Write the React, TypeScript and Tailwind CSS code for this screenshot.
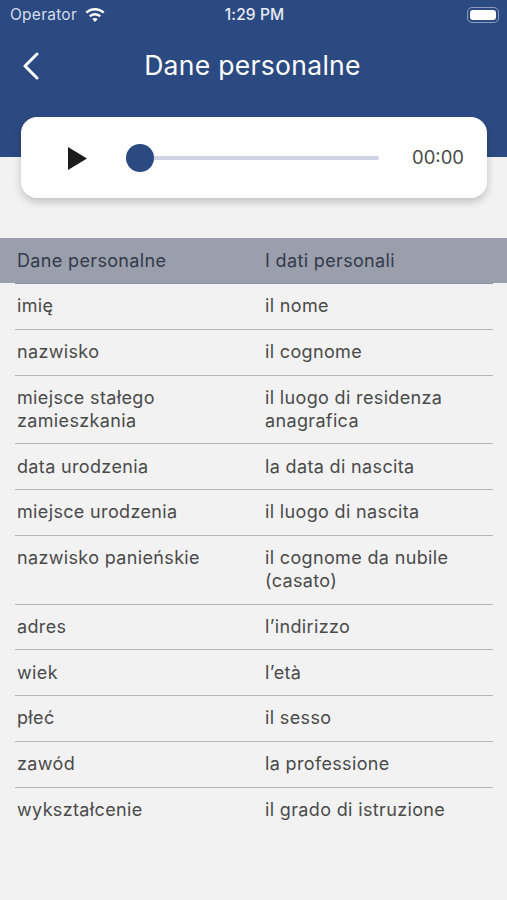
const rows: [string, string][] = [
  ["imię", "il nome"],
  ["nazwisko", "il cognome"],
  ["miejsce stałego zamieszkania", "il luogo di residenza anagrafica"],
  ["data urodzenia", "la data di nascita"],
  ["miejsce urodzenia", "il luogo di nascita"],
  ["nazwisko panieńskie", "il cognome da nubile (casato)"],
  ["adres", "l’indirizzo"],
  ["wiek", "l’età"],
  ["płeć", "il sesso"],
  ["zawód", "la professione"],
  ["wykształcenie", "il grado di istruzione"],
]

function StatusBar() {
  return (
    <div className="grid grid-cols-3 items-center h-[30px] pl-[10px] pr-[8px] text-white text-[15.5px]">
      <div className="flex items-center gap-[8px] text-[#d5dcea] tracking-[0.25px]">
        <span>Operator</span>
        <svg width="20" height="15" viewBox="0 0 20 15" fill="white">
          <path d="M10 0C6.3 0 3 1.4.5 3.8L2.2 5.6C4.2 3.6 7 2.4 10 2.4s5.800 1.200 7.800 3.200l1.700-1.800C17 1.400 13.700 0 10 0Z" />
          <path d="M10 5C7.700 5 5.600 5.900 4 7.400l1.700 1.800C6.800 8.100 8.300 7.400 10 7.400s3.200.7 4.300 1.800L16 7.400C14.400 5.900 12.300 5 10 5Z" />
          <path d="M10 10c-1 0-2 .4-2.700 1.100L10 14l2.700-2.900C12 10.400 11 10 10 10Z" />
        </svg>
      </div>
      <div className="text-center font-medium text-[#e8ecf4] whitespace-nowrap tracking-[0.1px]">1:29 PM</div>
      <div className="flex justify-end">
        <div className="w-[32px] h-[16px] rounded-[5px] border border-[#8b9cc0] p-[2px]">
          <div className="w-full h-full rounded-[3px] bg-white" />
        </div>
      </div>
    </div>
  )
}

function Player() {
  return (
    <div className="relative flex items-center h-[81px] ml-[21px] mr-[20px] -mt-[40px] pl-[47px] pr-[23px] bg-white rounded-[16px] shadow-[0_4px_8px_rgba(0,0,0,0.2)]">
      <svg width="19" height="23" viewBox="0 0 19 23" className="shrink-0 mt-[2px]">
        <path d="M0 0L19 11.5L0 23Z" fill="#1c1c1c" />
      </svg>
      <div className="flex items-center flex-1 ml-[39px] mr-[33px]">
        <div className="w-[28px] h-[28px] rounded-full bg-[#2c4a82] shrink-0" />
        <div className="flex-1 h-[4px] rounded-r-full bg-[#d0d2e6]" />
      </div>
      <span className="text-[18.5px] text-[#4a4a4a]">00:00</span>
    </div>
  )
}

export default function App() {
  return (
    <div className="w-[507px] h-[900px] overflow-hidden bg-[#f2f2f2] font-['Inter',sans-serif]">
      <header className="h-[157px] bg-[#2c4a82]">
        <StatusBar />
        <div className="flex items-center h-[40px] mt-[16px] px-[22px]">
          <svg width="18" height="28" viewBox="0 0 18 28" fill="none" stroke="white" strokeWidth="3" strokeLinecap="round" strokeLinejoin="round">
            <path d="M15 2L3 14L15 26" />
          </svg>
          <h1 className="flex-1 text-center text-white text-[26.5px] pr-[20px] tracking-[0.3px]">Dane personalne</h1>
        </div>
      </header>
      <Player />
      <div className="mt-[40px] h-[45px] bg-[#9b9eab] flex items-center text-[#333a4a] text-[18px] tracking-[0.35px]">
        <div className="pl-[17px] w-[265px] -mt-[1px]">Dane personalne</div>
        <div className="-mt-[1px]">I dati personali</div>
      </div>
      <div className="ml-[15px] mr-[14px] border-t border-[#8f919f]">
        {rows.map(([pl, it], i) => (
          <div
            key={pl}
            className={`flex pt-[10.2px] pb-[11.6px] text-[18px] tracking-[0.35px] leading-[23px] text-[#4a4a4a] ${i < rows.length - 1 ? "border-b border-[#b5b5b5]" : ""}`}
          >
            <div className="pl-[2px] w-[250px] pr-[40px]">{pl}</div>
            <div className="flex-1 pr-[20px]">{it}</div>
          </div>
        ))}
      </div>
    </div>
  )
}
